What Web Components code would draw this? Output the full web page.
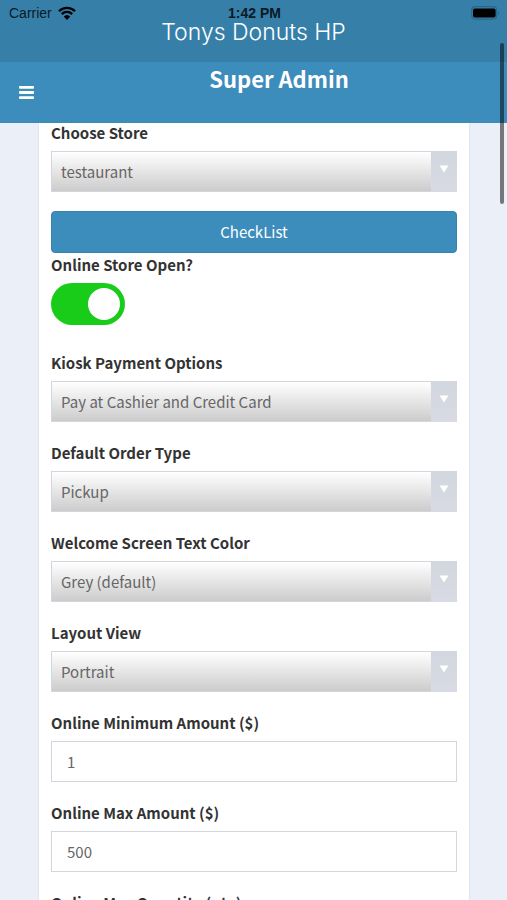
<!DOCTYPE html>
<html lang="en">
<head>
<meta charset="utf-8">
<meta name="viewport" content="width=device-width, initial-scale=1">
<title>Super Admin</title>
<style>
  html, body { margin: 0; height: 100%; }
  body {
    font-family: "Noto Sans CJK SC", "Noto Sans", sans-serif;
    font-size: 15px;
    line-height: 20px;
    color: #333;
    background: #ebeff7;
  }
</style>
</head>
<body>
<admin-shell>
  <status-bar slot="header" carrier="Carrier" time="1:42 PM"></status-bar>
  <brand-title slot="header">Tonys Donuts HP</brand-title>
  <nav-bar slot="header">Super Admin</nav-bar>
  <form-card>
    <select-field label="Choose Store" value="testaurant"></select-field>
    <action-button>CheckList</action-button>
    <toggle-field label="Online Store Open?" checked></toggle-field>
    <select-field label="Kiosk Payment Options" value="Pay at Cashier and Credit Card"></select-field>
    <select-field label="Default Order Type" value="Pickup"></select-field>
    <select-field label="Welcome Screen Text Color" value="Grey (default)"></select-field>
    <select-field label="Layout View" value="Portrait"></select-field>
    <text-field label="Online Minimum Amount ($)" value="1"></text-field>
    <text-field label="Online Max Amount ($)" value="500"></text-field>
    <text-field label="Online Max Quantity (qty)" value=""></text-field>
  </form-card>
</admin-shell>
<script>
class BaseElement extends HTMLElement {
  render(html) {
    this.attachShadow({ mode: 'open' }).innerHTML = html;
  }
  attr(name) { return this.getAttribute(name) || ''; }
}

customElements.define('admin-shell', class extends BaseElement {
  connectedCallback() {
    this.render(`
      <style>
        :host { display: flex; flex-direction: column; height: 100vh; position: relative; overflow: hidden; }
        header { flex: none; display: flex; flex-direction: column; background: #3c8dbc; color: #fff; }
        main { flex: 1; min-height: 0; overflow-y: auto; scrollbar-width: none; padding: 0 38px 0 39px; }
        .thumb { position: absolute; right: 3px; top: 43px; width: 4px; height: 161px; border-radius: 2px; background: rgba(0,0,0,.5); }
      </style>
      <header><slot name="header"></slot></header>
      <main><slot></slot></main>
      <div class="thumb" aria-hidden="true"></div>`);
  }
});

customElements.define('status-bar', class extends BaseElement {
  connectedCallback() {
    this.render(`
      <style>
        :host { display: grid; grid-template-columns: 1fr auto 1fr; align-items: center; height: 20px;
          padding: 5px 7px 0 9px; box-sizing: border-box; background: #367fa9; color: #0a1a24;
          font: 14px/16px "Liberation Sans", sans-serif; }
        .left { display: flex; align-items: center; gap: 6px; }
        .time { font-weight: 700; }
        .right { display: flex; justify-content: flex-end; }
        svg { display: block; }
      </style>
      <span class="left">${this.attr('carrier')}
        <svg width="18" height="14" viewBox="0 0 18 14" aria-hidden="true">
          <path d="M1 5.2a11.4 11.4 0 0 1 16 0M3.8 8.1a7.4 7.4 0 0 1 10.4 0" fill="none" stroke="#000" stroke-width="2.3"/>
          <path d="M9 14 5.7 10.5a4.8 4.8 0 0 1 6.6 0z"/>
        </svg></span>
      <span class="time">${this.attr('time')}</span>
      <span class="right">
        <svg width="29" height="14" viewBox="0 0 29 14" aria-hidden="true">
          <rect x=".7" y=".7" width="25" height="12.4" rx="3.5" fill="none" stroke="#2a6688" stroke-width="1.2"/>
          <rect x="2" y="2.4" width="22.6" height="9" rx="2"/>
          <path d="M27 4.7q2 2.3 0 4.6z" fill="#2a6688"/>
        </svg></span>`);
  }
});

customElements.define('brand-title', class extends BaseElement {
  connectedCallback() {
    this.render(`
      <style>
        :host { display: block; height: 42px; background: #367fa9; text-align: center;
          font: 300 23px/24px Inter, Roboto, sans-serif; }
      </style>
      <slot></slot>`);
  }
});

customElements.define('nav-bar', class extends BaseElement {
  connectedCallback() {
    this.render(`
      <style>
        :host { display: flex; height: 61px; }
        button { width: 51px; padding: 0 0 0 19px; border: 0; background: none; color: inherit; }
        svg { display: block; }
        h1 { flex: 1; margin: 0; text-align: center; font-size: 22px; line-height: 32px; font-weight: 700; }
      </style>
      <button type="button" aria-label="Toggle navigation">
        <svg width="15" height="13" viewBox="0 0 15 13" fill="currentColor" aria-hidden="true">
          <rect width="15" height="2.8" rx=".8"/><rect y="5.1" width="15" height="2.8" rx=".8"/><rect y="10.2" width="15" height="2.8" rx=".8"/>
        </svg>
      </button>
      <h1><slot></slot></h1>`);
  }
});

customElements.define('form-card', class extends BaseElement {
  connectedCallback() {
    this.render(`
      <style>
        :host { display: flex; flex-direction: column; padding: 0 12px; background: #fff; box-shadow: 0 1px 2px rgba(0,0,0,.12); }
      </style>
      <slot></slot>`);
  }
});

const fieldStyles = `
  :host { display: flex; flex-direction: column; gap: 8px; margin-bottom: 21px; }
  label { font-weight: 700; color: #333; }
  select, input[type=text] {
    appearance: none; display: block; width: 100%; height: 41px; box-sizing: border-box; margin: 0;
    border: 1px solid #d2d6de; border-radius: 0; font: inherit; color: #666; outline-offset: 1px;
  }`;

customElements.define('select-field', class extends BaseElement {
  connectedCallback() {
    this.render(`
      <style>${fieldStyles}
        .box { display: grid; grid-template-columns: 1fr 26px; }
        select { grid-area: 1 / 1 / 2 / 3; padding: 0 35px 0 9px; background: linear-gradient(#fff, #ccc); }
        .arrow { grid-area: 1 / 2; z-index: 1; pointer-events: none; display: flex; justify-content: center;
          padding-top: 14px; background: linear-gradient(#d2d6de, #d8dbe3); }
      </style>
      <label for="f">${this.attr('label')}</label>
      <div class="box">
        <select id="f"><option>${this.attr('value')}</option></select>
        <span class="arrow"><svg width="10" height="8" viewBox="0 0 10 8" aria-hidden="true"><path d="M.5.5h9L5 7.5z" fill="#fff"/></svg></span>
      </div>`);
  }
});

customElements.define('text-field', class extends BaseElement {
  connectedCallback() {
    this.render(`
      <style>${fieldStyles}
        input[type=text] { padding: 0 15px; background: #fff; }
      </style>
      <label for="f">${this.attr('label')}</label>
      <input id="f" type="text" inputmode="decimal" value="${this.attr('value')}">`);
  }
});

customElements.define('action-button', class extends BaseElement {
  connectedCallback() {
    this.render(`
      <style>
        :host { display: block; margin: -2px 0 2px; }
        button { display: block; width: 100%; height: 42px; padding: 0; border: 1px solid #3883b0; border-radius: 4px;
          background: #3c8dbc; color: #fff; font: inherit; }
      </style>
      <button type="button"><slot></slot></button>`);
  }
});

customElements.define('toggle-field', class extends BaseElement {
  connectedCallback() {
    this.render(`
      <style>${fieldStyles}
        :host { margin-bottom: 28px; }
        input { appearance: none; display: flex; align-items: center; width: 74px; height: 42px; margin: 0; padding: 0 5px;
          box-sizing: border-box; border-radius: 21px; background: #ccc; }
        input::before { content: ""; width: 32px; height: 32px; border-radius: 50%; background: #fff; }
        input:checked { justify-content: flex-end; background: #19cc19; }
      </style>
      <label for="f">${this.attr('label')}</label>
      <input id="f" type="checkbox" role="switch" ${this.hasAttribute('checked') ? 'checked' : ''}>`);
  }
});
</script>
</body>
</html>
